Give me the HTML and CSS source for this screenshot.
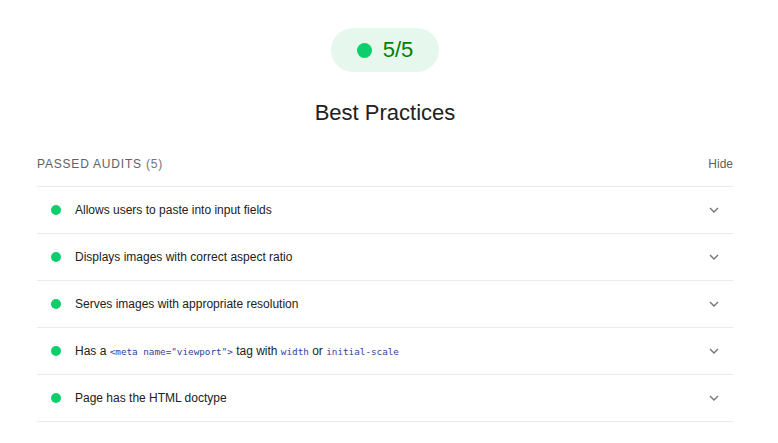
FILE: index.html
```html
<!DOCTYPE html>
<html>
<head>
<meta charset="utf-8">
<link rel="stylesheet" href="styles.css">
</head>
<body>
<div class="page">
  <div class="gauge">
    <div class="badge"><span class="badge-dot"></span><span class="badge-text">5/5</span></div>
    <h1 class="title">Best Practices</h1>
  </div>
  <div class="group-head">
    <div class="group-title">Passed audits <span class="count">(5)</span></div>
    <div class="hide">Hide</div>
  </div>
  <div class="audits">
    <div class="audit"><span class="dot"></span><span class="label">Allows users to paste into input fields</span><svg class="chev" viewBox="0 0 10 6" width="10" height="6"><path d="M1 1 L5 5 L9 1" fill="none" stroke="#757575" stroke-width="1.4"/></svg></div>
    <div class="audit"><span class="dot"></span><span class="label">Displays images with correct aspect ratio</span><svg class="chev" viewBox="0 0 10 6" width="10" height="6"><path d="M1 1 L5 5 L9 1" fill="none" stroke="#757575" stroke-width="1.4"/></svg></div>
    <div class="audit"><span class="dot"></span><span class="label">Serves images with appropriate resolution</span><svg class="chev" viewBox="0 0 10 6" width="10" height="6"><path d="M1 1 L5 5 L9 1" fill="none" stroke="#757575" stroke-width="1.4"/></svg></div>
    <div class="audit"><span class="dot"></span><span class="label">Has a <code>&lt;meta name="viewport"&gt;</code> tag with <code>width</code> or <code>initial-scale</code></span><svg class="chev" viewBox="0 0 10 6" width="10" height="6"><path d="M1 1 L5 5 L9 1" fill="none" stroke="#757575" stroke-width="1.4"/></svg></div>
    <div class="audit"><span class="dot"></span><span class="label">Page has the HTML doctype</span><svg class="chev" viewBox="0 0 10 6" width="10" height="6"><path d="M1 1 L5 5 L9 1" fill="none" stroke="#757575" stroke-width="1.4"/></svg></div>
  </div>
</div>
</body>
</html>
```
FILE: styles.css
```css
html, body {
  margin: 0;
  padding: 0;
  background: #fff;
}
body {
  font-family: "Liberation Sans", Arial, sans-serif;
  color: #212121;
}
.page {
  padding: 28px 45px 0 37px;
}
.gauge {
  display: flex;
  flex-direction: column;
  align-items: center;
}
.badge {
  display: flex;
  align-items: center;
  gap: 11px;
  height: 44px;
  padding: 0 26px 0 26px;
  border-radius: 22px;
  background: #e6f8ee;
  box-sizing: border-box;
}
.badge-dot {
  width: 15px;
  height: 15px;
  border-radius: 50%;
  background: #0cce6b;
}
.badge-text {
  font-size: 22px;
  color: #008000;
  line-height: 1;
}
.title {
  margin: 27px 0 0 0;
  font-size: 22px;
  font-weight: 400;
  line-height: 28px;
  color: #212121;
}
.group-head {
  display: flex;
  justify-content: space-between;
  align-items: center;
  margin-top: 27px;
  height: 20px;
  padding-bottom: 12px;
  border-bottom: 1px solid #ebebeb;
}
.group-title {
  text-transform: uppercase;
  font-size: 12px;
  letter-spacing: 0.8px;
  color: #616161;
}
.count {
  color: #757575;
}
.hide {
  font-size: 12px;
  color: #616161;
}
.audit {
  display: flex;
  align-items: center;
  height: 46px;
  border-bottom: 1px solid #ebebeb;
  padding-left: 14px;
  padding-right: 14px;
}
.dot {
  width: 10px;
  height: 10px;
  border-radius: 50%;
  background: #0cce6b;
  flex: none;
}
.label {
  margin-left: 14px;
  font-size: 12px;
  color: #212121;
  flex: 1;
}
code {
  font-family: "DejaVu Sans Mono", monospace;
  font-size: 9.3px;
  color: #303f9f;
}
.chev {
  flex: none;
}
```
